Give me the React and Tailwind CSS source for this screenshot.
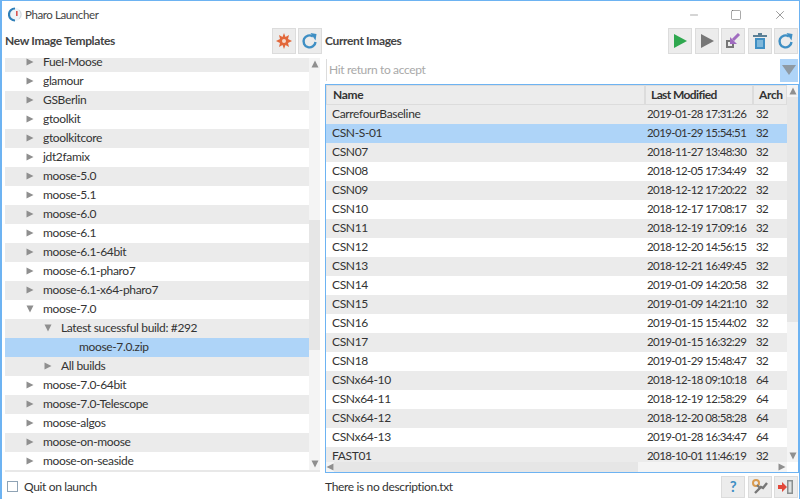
import { Minus, Square, X } from "lucide-react";

const templates = [
  { name: "Fuel-Moose", arrow: "right", level: 0 },
  { name: "glamour", arrow: "right", level: 0 },
  { name: "GSBerlin", arrow: "right", level: 0 },
  { name: "gtoolkit", arrow: "right", level: 0 },
  { name: "gtoolkitcore", arrow: "right", level: 0 },
  { name: "jdt2famix", arrow: "right", level: 0 },
  { name: "moose-5.0", arrow: "right", level: 0 },
  { name: "moose-5.1", arrow: "right", level: 0 },
  { name: "moose-6.0", arrow: "right", level: 0 },
  { name: "moose-6.1", arrow: "right", level: 0 },
  { name: "moose-6.1-64bit", arrow: "right", level: 0 },
  { name: "moose-6.1-pharo7", arrow: "right", level: 0 },
  { name: "moose-6.1-x64-pharo7", arrow: "right", level: 0 },
  { name: "moose-7.0", arrow: "down", level: 0 },
  { name: "Latest sucessful build: #292", arrow: "down", level: 1 },
  { name: "moose-7.0.zip", arrow: null, level: 2, selected: true },
  { name: "All builds", arrow: "right", level: 1 },
  { name: "moose-7.0-64bit", arrow: "right", level: 0 },
  { name: "moose-7.0-Telescope", arrow: "right", level: 0 },
  { name: "moose-algos", arrow: "right", level: 0 },
  { name: "moose-on-moose", arrow: "right", level: 0 },
  { name: "moose-on-seaside", arrow: "right", level: 0 },
];

const images = [
  ["CarrefourBaseline", "2019-01-28 17:31:26", "32"],
  ["CSN-S-01", "2019-01-29 15:54:51", "32"],
  ["CSN07", "2018-11-27 13:48:30", "32"],
  ["CSN08", "2018-12-05 17:34:49", "32"],
  ["CSN09", "2018-12-12 17:20:22", "32"],
  ["CSN10", "2018-12-17 17:08:17", "32"],
  ["CSN11", "2018-12-19 17:09:16", "32"],
  ["CSN12", "2018-12-20 14:56:15", "32"],
  ["CSN13", "2018-12-21 16:49:45", "32"],
  ["CSN14", "2019-01-09 14:20:58", "32"],
  ["CSN15", "2019-01-09 14:21:10", "32"],
  ["CSN16", "2019-01-15 15:44:02", "32"],
  ["CSN17", "2019-01-15 16:32:29", "32"],
  ["CSN18", "2019-01-29 15:48:47", "32"],
  ["CSNx64-10", "2018-12-18 09:10:18", "64"],
  ["CSNx64-11", "2018-12-19 12:58:29", "64"],
  ["CSNx64-12", "2018-12-20 08:58:28", "64"],
  ["CSNx64-13", "2019-01-28 16:34:47", "64"],
  ["FAST01", "2018-10-01 11:46:19", "32"],
];

// small toolbar button, the icon is passed as children
function ToolButton({ children, small }) {
  return (
    <div
      className={`w-[24px] ${
        small ? "h-[22px]" : "h-[26px]"
      } flex items-center justify-center bg-[#ececec] border border-[#dcdcdc]`}
    >
      {children}
    </div>
  );
}

function Triangle({ dir }) {
  const points = {
    right: "0.5,0.5 7.5,4 0.5,7.5",
    left: "7.5,0.5 0.5,4 7.5,7.5",
    down: "0.5,0.5 7.5,0.5 4,7.5",
    up: "0.5,7.5 7.5,7.5 4,0.5",
  };
  return (
    <svg width="8" height="8" viewBox="0 0 8 8" className="shrink-0">
      <polygon points={points[dir]} fill="#8f8f8f" />
    </svg>
  );
}

function RefreshIcon() {
  return (
    <svg width="18" height="18" viewBox="0 0 18 18" fill="none">
      <path d="M14.5 10a6 6 0 1 1-2.6-5.6" stroke="#3f8fc4" strokeWidth="2.4" />
      <polygon points="9.5,1 15.5,2 14.5,8.5" fill="#3f8fc4" />
    </svg>
  );
}

function PlayIcon({ color }) {
  return (
    <svg width="16" height="16" viewBox="0 0 16 16">
      <polygon points="2,1 15,8 2,15" fill={color} />
    </svg>
  );
}

export default function App() {
  return (
    <div className="w-[800px] h-[499px] overflow-hidden bg-white flex flex-col border-l-2 border-r border-t border-[#6db3f2] text-[12px] tracking-[-0.35px] text-[#333] font-['Lato',sans-serif]">
      {/* title bar */}
      <div className="h-[27px] shrink-0 flex items-center pl-[6px]">
        <svg width="15" height="15" viewBox="0 0 15 15">
          <circle cx="7.5" cy="7.5" r="6.5" fill="#eef3f7" />
          <path d="M7 1.5a6 6 0 0 0 0 12" fill="none" stroke="#2f7fb8" strokeWidth="2.2" />
          <path d="M11 3a6 6 0 0 1 0 9" fill="none" stroke="#cfd8de" strokeWidth="1" />
          <rect x="8" y="4" width="1.6" height="5" fill="#d9534f" />
        </svg>
        <span className="ml-[2px] text-[11.5px] tracking-[-0.4px] text-[#444]">Pharo Launcher</span>
        <div className="ml-auto flex items-center text-[#555]">
          <div className="w-[36px] flex justify-center">
            <Minus size={12} strokeWidth={1} />
          </div>
          <div className="w-[48px] flex justify-center">
            <Square size={12} strokeWidth={1} />
          </div>
          <div className="w-[39px] flex justify-center">
            <X size={14} strokeWidth={1} />
          </div>
        </div>
      </div>

      <div className="flex-1 flex min-h-0">
        {/* left side */}
        <div className="w-[323px] shrink-0 flex flex-col pl-[3px]">
          <div className="h-[30px] shrink-0 flex items-center pb-[4px]">
            <span className="font-bold text-[#444]">New Image Templates</span>
            <div className="ml-auto flex gap-[2px] pr-[3px]">
              <ToolButton>
                <svg width="16" height="16" viewBox="0 0 16 16">
                  <polygon
                    points="8,0 9.5,4 13,2 12,6 16,8 12,10 13,14 9.5,12 8,16 6.5,12 3,14 4,10 0,8 4,6 3,2 6.5,4"
                    fill="#e2673a"
                  />
                  <circle cx="8" cy="8" r="2" fill="#f6d9c9" />
                </svg>
              </ToolButton>
              <ToolButton>
                <RefreshIcon />
              </ToolButton>
            </div>
          </div>
          <div className="h-[414px] shrink-0 flex flex-col overflow-hidden pr-[5px]">
            <div className="flex-1 min-h-0 flex">
              <div className="flex-1 overflow-hidden">
                <div className="-mt-[5px]">
                  {templates.map((t, i) => (
                    <div
                      key={t.name}
                      className={`h-[19px] flex items-center pb-[1px] ${
                        t.selected ? "bg-[#aed4f8]" : i % 2 === 0 ? "bg-[#ebebeb]" : "bg-white"
                      }`}
                    >
                      <div
                        className={`flex items-center ${
                          t.level === 0 ? "pl-[21px]" : t.level === 1 ? "pl-[39px]" : "pl-[74px]"
                        }`}
                      >
                        {t.arrow && <Triangle dir={t.arrow} />}
                        <span className={t.arrow ? "ml-[9px]" : ""}>{t.name}</span>
                      </div>
                    </div>
                  ))}
                </div>
              </div>
              <div className="w-[11px] shrink-0 flex flex-col items-center bg-[#f4f4f4]">
                <div className="h-[12px] flex items-center justify-center">
                  <Triangle dir="up" />
                </div>
                <div className="flex-1 w-full flex flex-col">
                  <div className="h-[150px]" />
                  <div className="h-[130px] bg-[#e6e6e6]" />
                </div>
                <div className="h-[12px] flex items-center justify-center">
                  <Triangle dir="down" />
                </div>
              </div>
            </div>
            <div className="h-[2px] shrink-0 bg-[#e8e8e8]" />
          </div>
          <div className="flex-1 flex items-center pl-[2px] gap-[6px] pt-[2px]">
            <div className="w-[11px] h-[11px] border border-[#8fa3b5] bg-white" />
            <span>Quit on launch</span>
          </div>
        </div>

        {/* right side */}
        <div className="flex-1 min-w-0 flex flex-col">
          <div className="h-[30px] shrink-0 flex items-center pb-[4px]">
            <span className="font-bold text-[#444]">Current Images</span>
            <div className="ml-auto flex gap-[2.5px] pr-[1px]">
              <ToolButton>
                <PlayIcon color="#2fa84f" />
              </ToolButton>
              <ToolButton>
                <PlayIcon color="#777777" />
              </ToolButton>
              <ToolButton>
                <svg width="18" height="18" viewBox="0 0 18 18" fill="none">
                  <path d="M9 9H3v6h6v-4" stroke="#777" strokeWidth="2" />
                  <path d="M15 2l-6 6" stroke="#a06cc0" strokeWidth="3" />
                  <polygon points="6,5 6,12 13,12" fill="#a06cc0" />
                </svg>
              </ToolButton>
              <ToolButton>
                <svg width="16" height="18" viewBox="0 0 16 18">
                  <rect x="1" y="3" width="14" height="2" fill="#5b7f95" />
                  <rect x="6" y="1" width="4" height="2" fill="#5b7f95" />
                  <path d="M3 6h10v11H3z" fill="#3f8fc4" />
                  <path d="M6 8v7M8 8v7M10 8v7" stroke="#bfe0f2" strokeWidth="1" />
                </svg>
              </ToolButton>
              <ToolButton>
                <RefreshIcon />
              </ToolButton>
            </div>
          </div>
          <div className="h-[26px] shrink-0 flex items-center pl-[1px] pb-[2px]">
            <div className="w-[1px] h-[22px] bg-[#dcdcdc] mr-[2px]" />
            <span className="text-[#a9a9a9]">Hit return to accept</span>
            <div className="ml-auto mr-[1px] w-[18px] h-[23px] bg-[#aed4f8] flex items-center justify-center">
              <svg width="14" height="10" viewBox="0 0 14 10">
                <polygon points="0,0 14,0 7,10" fill="#8f9aa3" />
              </svg>
            </div>
          </div>

          {/* table */}
          <div className="h-[389px] shrink-0 border border-[#6db3f2] flex flex-col overflow-hidden">
            <div className="flex-1 min-h-0 flex">
              <div className="flex-1 min-w-0 overflow-hidden">
                <div className="h-[20px] flex font-bold">
                  <div className="w-[319px] shrink-0 bg-[#ececec] border border-[#dcdcdc] flex items-center pl-[6px]">Name</div>
                  <div className="w-[108px] shrink-0 bg-[#ececec] border border-[#dcdcdc] flex items-center pl-[5px] whitespace-nowrap tracking-[-0.6px]">Last Modified</div>
                  <div className="flex-1 bg-[#ececec] border border-[#dcdcdc] flex items-center pl-[5px]">Arch</div>
                </div>
                {images.map((row, i) => (
                  <div
                    key={row[0]}
                    className={`h-[19px] flex items-center pb-[1px] ${
                      i === 1 ? "bg-[#aed4f8]" : i % 2 === 0 ? "bg-[#ebebeb]" : "bg-white"
                    }`}
                  >
                    <div className="w-[319px] shrink-0 pl-[6px]">{row[0]}</div>
                    <div className="w-[108px] shrink-0 pl-[2px] whitespace-nowrap text-[11.5px] tracking-[-0.6px]">{row[1]}</div>
                    <div className="pl-[3px] text-[11.5px] tracking-[-0.6px]">{row[2]}</div>
                  </div>
                ))}
              </div>
              <div className="w-[11px] shrink-0 flex flex-col items-center bg-[#f4f4f4]">
                <div className="h-[12px] flex items-center justify-center">
                  <Triangle dir="up" />
                </div>
                <div className="h-[225px] w-full bg-[#e6e6e6]" />
                <div className="flex-1" />
                <div className="h-[12px] flex items-center justify-center">
                  <Triangle dir="down" />
                </div>
              </div>
            </div>
            <div className="h-[10px] shrink-0 flex items-center bg-white">
              <div className="flex-1 h-full flex items-center bg-[#f4f4f4]">
                <Triangle dir="left" />
                <div className="w-[304px] h-full bg-[#e6e6e6]" />
                <div className="flex-1" />
                <div className="pr-[1px]">
                  <Triangle dir="right" />
                </div>
              </div>
              <div className="w-[11px] shrink-0" />
            </div>
          </div>

          <div className="flex-1 flex items-center pt-[1px]">
            <span>There is no description.txt</span>
            <div className="ml-auto flex gap-[2.5px] pr-[1px]">
              <ToolButton small>
                <span className="text-[15px] font-bold text-[#3f8fc4]">?</span>
              </ToolButton>
              <ToolButton small>
                <svg width="18" height="18" viewBox="0 0 18 18" fill="none">
                  <circle cx="5" cy="5" r="3" stroke="#d99a4e" strokeWidth="2" />
                  <path d="M6 7l3 3" stroke="#777" strokeWidth="2" />
                  <path d="M4 15l6-6 2 1 4-5" stroke="#777" strokeWidth="2.4" />
                </svg>
              </ToolButton>
              <ToolButton small>
                <svg width="18" height="18" viewBox="0 0 18 18">
                  <rect x="10" y="2" width="6" height="14" fill="#8a8f8f" />
                  <rect x="11.5" y="3.5" width="3" height="11" fill="#dfe3e3" />
                  <polygon points="1,7 5,7 5,4 10,9 5,14 5,11 1,11" fill="#e2483a" />
                </svg>
              </ToolButton>
            </div>
          </div>
        </div>
      </div>
    </div>
  );
}
